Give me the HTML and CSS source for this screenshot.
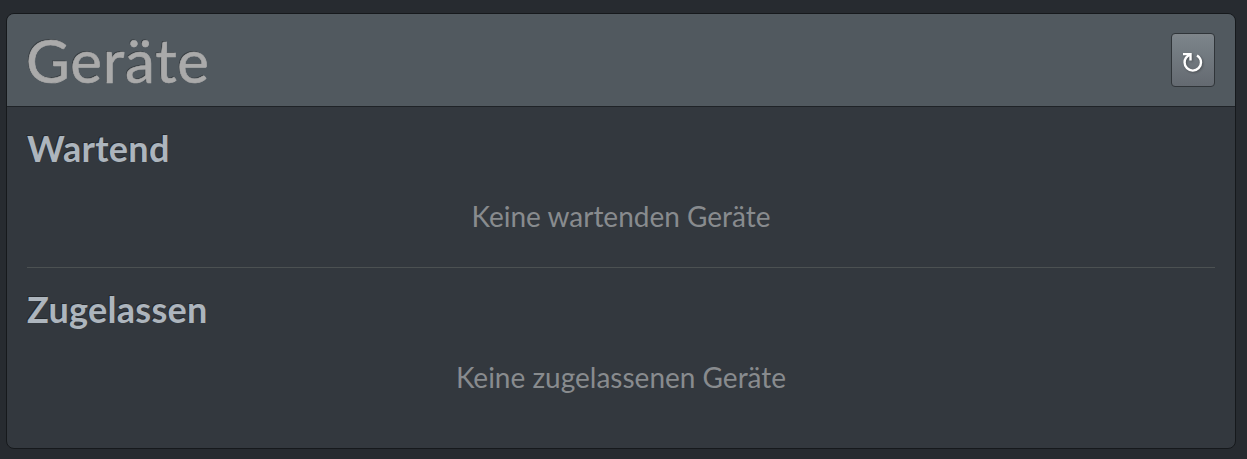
FILE: index.html
```html
<!DOCTYPE html>
<html lang="de">

<head>
    <meta charset="UTF-8">
    <meta name="viewport" content="width=device-width, initial-scale=1.0">
    <link rel="stylesheet" href="styles.css">
    <title>Geräte</title>
</head>

<body>
    <main class="card">
        <header class="card-header">
            <h1>Geräte</h1>
            <button class="btn" type="button" aria-label="Aktualisieren">
                <svg class="icon" viewBox="0 0 22 22">
                    <path d="M1 2.1H8.5V8.6" />
                    <path d="M7.9 2.6C4.6 4.2 2.6 7 2.6 10.4A8.2 8.2 0 0 0 19 10.4C19 7.4 17.6 5.1 15 3.5" />
                </svg>
            </button>
        </header>

        <div class="card-body">
            <section>
                <h2>Wartend</h2>
                <p class="empty">Keine wartenden Geräte</p>
            </section>
            <hr>
            <section>
                <h2>Zugelassen</h2>
                <p class="empty">Keine zugelassenen Geräte</p>
            </section>
        </div>
    </main>
</body>

</html>
```

FILE: styles.css
```css
* {
    box-sizing: border-box;
}

body {
    margin: 0;
    padding: 13px 11px 10px 6px;
    height: 459px;
    font-family: Lato, sans-serif;
    font-size: 28px;
    line-height: 42px;
    background: #272b30;
    color: #aaa;
}

.card {
    height: 436px;
    border: 1px solid #16191c;
    border-radius: 8px;
    background: #33383e;
    overflow: hidden;
}

.card-header {
    display: flex;
    align-items: center;
    justify-content: space-between;
    height: 93px;
    padding: 0 20px;
    border-bottom: 1px solid #1f2327;
    background: #51595f;
}

h1 {
    margin: 0 0 0 -1px;
    font-size: 60px;
    font-weight: 400;
    line-height: 72px;
    letter-spacing: 0.8px;
    -webkit-text-stroke: 0.6px #aaa;
    text-shadow: -1px -1px 0 rgba(0, 0, 0, 0.3);
}

.btn {
    display: flex;
    align-items: center;
    justify-content: center;
    width: 44px;
    height: 54px;
    padding: 5px 0 0;
    border: 1px solid #303539;
    border-radius: 4px;
    background: linear-gradient(#80868b, #7a8288 10%, #646a71);
    color: #fff;
}

.icon {
    width: 22px;
    height: 22px;
    fill: none;
    stroke: currentColor;
    stroke-width: 2.4;
    filter: drop-shadow(1px 1px 1px rgba(0, 0, 0, 0.3));
}

.card-body {
    padding: 19px 20px;
}

h2 {
    margin: 0;
    font-size: 36px;
    font-weight: 700;
    line-height: 44px;
    letter-spacing: 0.3px;
    color: #adb5bd;
    text-shadow: -1px -1px 0 rgba(0, 0, 0, 0.3);
}

.empty {
    margin: 25px 0 0;
    color: #888b8e;
    text-align: center;
}

hr {
    height: 1px;
    margin: 30px 0 19px;
    border: 0;
    background: #4c5152;
}
```
